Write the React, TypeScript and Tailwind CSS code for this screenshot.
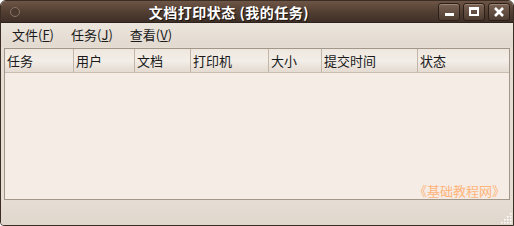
import React from "react";

const FONT = { fontFamily: '"Noto Sans CJK SC", "DejaVu Sans", sans-serif' };

const columns = [
  { label: "任务", w: "w-[68px]" },
  { label: "用户", w: "w-[61px]" },
  { label: "文档", w: "w-[56px]" },
  { label: "打印机", w: "w-[78px]" },
  { label: "大小", w: "w-[53px]" },
  { label: "提交时间", w: "w-[96px]" },
  { label: "状态", w: "flex-1" },
];

function WinButton({ children }: { children: React.ReactNode }) {
  return (
    <div className="w-[22px] h-[18px] rounded-[3px] border border-[#2a1f19] bg-gradient-to-b from-[#7a6354] to-[#4e3c31] shadow-[inset_0_1px_0_#9a8474] flex items-center justify-center">
      {children}
    </div>
  );
}

export default function App() {
  return (
    <div className="w-[514px] h-[226px] bg-white" style={FONT}>
      <div className="w-[514px] h-[226px] flex flex-col bg-[#e6ded5] border border-[#3b2d24] rounded-t-[6px] rounded-bl-[4px] overflow-hidden">
        {/* Title bar */}
        <div className="h-[22px] shrink-0 flex items-center bg-gradient-to-b from-[#6e5646] via-[#533f33] to-[#3e2f27] border-b border-[#2d221c]">
          <div className="w-[10px] h-[10px] ml-[9px] rounded-full border border-[#8a7566] bg-[#4c3a30]" />
          <div className="flex-1 text-center text-white font-bold text-[14px] leading-none tracking-[0.5px] [text-shadow:1px_1px_0_#1d140f]">
            文档打印状态 (我的任务)
          </div>
          <div className="flex gap-[3px] mr-[3px]">
            <WinButton>
              <div className="w-[9px] h-[3px] bg-white mt-[6px]" />
            </WinButton>
            <WinButton>
              <div className="w-[10px] h-[9px] border-2 border-white border-t-[3px]" />
            </WinButton>
            <WinButton>
              <svg width="10" height="10" viewBox="0 0 10 10">
                <path d="M1 1 L9 9 M9 1 L1 9" stroke="white" strokeWidth="2.6" />
              </svg>
            </WinButton>
          </div>
        </div>

        {/* Menu bar */}
        <div className="h-[24px] shrink-0 flex items-center gap-[17px] px-[11px] text-[13px] text-[#1a1a1a] bg-gradient-to-b from-[#ece5dd] to-[#e2d9cf]">
          <span>文件(<span className="underline">F</span>)</span>
          <span>任务(<span className="underline">J</span>)</span>
          <span>查看(<span className="underline">V</span>)</span>
        </div>

        {/* Tree view */}
        <div className="mx-[3px] mt-[1px] h-[152px] shrink-0 flex flex-col border border-[#a3978a] bg-[#f5ece5]">
          <div className="h-[24px] flex border-b border-[#c9bdb1] bg-gradient-to-b from-[#eee7df] via-[#f3eee8] to-[#e4dbd1]">
            {columns.map((c, i) => (
              <div
                key={c.label}
                className={`${c.w} flex items-center pl-[2px] text-[13px] text-[#1a1a1a] ${i > 0 ? "border-l border-[#c2b6a9]" : ""}`}
              >
                {c.label}
              </div>
            ))}
          </div>
          <div className="flex-1 flex items-end justify-end pr-[4px] pb-[2px]">
            <span className="text-[13px] text-[#ffb47a] leading-none">《基础教程网》</span>
          </div>
        </div>

        {/* Status bar */}
        <div className="flex-1 relative bg-gradient-to-b from-[#e6ded5] to-[#dfd6cc]">
          <svg className="absolute right-[1px] bottom-[1px]" width="12" height="12" viewBox="0 0 12 12">
            {[
              [10, 2], [7, 5], [10, 5], [4, 8], [7, 8], [10, 8], [1, 11], [4, 11], [7, 11], [10, 11],
            ].map(([x, y], i) => (
              <rect key={i} x={x} y={y - 1} width="1.5" height="1.5" fill="#fff" />
            ))}
          </svg>
        </div>
      </div>
    </div>
  );
}
